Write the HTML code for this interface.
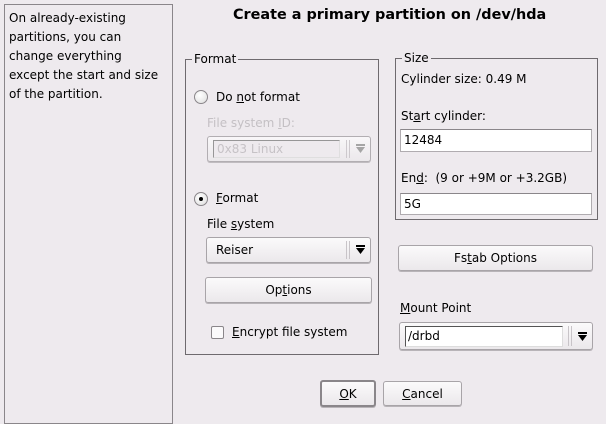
<!DOCTYPE html>
<html><head><meta charset="utf-8"><style>
*{box-sizing:border-box;margin:0;padding:0}
body{width:606px;height:413px;background:#eeeaee;font-family:"DejaVu Sans","Liberation Sans",sans-serif;font-size:12px;color:#000;position:relative;overflow:hidden}
.a{position:absolute;white-space:nowrap}
u{text-decoration:underline}
.panel{position:absolute;left:4px;top:4px;width:169px;height:420px;border:1px solid #8a868a;background:#eeeaee}
.grp{position:absolute;border:1px solid #6e6a6e}
.lg{position:absolute;background:#eeeaee;padding:0 2px;top:-9px;left:6px;line-height:16px}
.btn{position:absolute;border:1px solid #a8a4a8;border-radius:3px;background:linear-gradient(#fbfafb,#ebe8eb);box-shadow:0 1px 0 #b8b4b8;text-align:center;line-height:24px}
.inp{position:absolute;background:#fff;border:1px solid #b0acb0;border-top-color:#8a868a;padding-left:3px;line-height:20px}
.radio{position:absolute;width:14px;height:14px;border-radius:50%;border:1px solid #8a868a;background:radial-gradient(circle at 40% 35%,#fff,#ddd)}
.arrow{position:absolute;right:5px;top:7px;width:9px;height:10px}
.sep{position:absolute;right:20px;top:3px;bottom:3px;width:4px;border-left:1px solid #c8c4c8;border-right:1px solid #c8c4c8}
</style></head><body>
<div class="panel"></div>
<div class="a" style="left:9px;top:9px;line-height:19px;white-space:normal;width:160px">On already-existing<br>partitions, you can<br>change everything<br>except the start and size<br>of the partition.</div>
<div class="a" style="left:233px;top:7px;font-weight:bold;font-size:14.4px">Create a primary partition on /dev/hda</div>

<div class="grp" style="left:185px;top:59px;width:194px;height:296px"><div class="lg">Format</div></div>
<div class="radio" style="left:194px;top:90px"></div>
<div class="a" style="left:216px;top:90px">Do <u>n</u>ot format</div>
<div class="a" style="left:207px;top:116px;color:#c4c0c4">File system <u>I</u>D:</div>
<div class="btn" style="left:207px;top:136px;width:164px;height:26px;opacity:.85">
 <div class="a" style="left:5px;top:3px;width:127px;height:18px;border:1px solid #888;border-right-color:#ddd;border-bottom-color:#ddd;background:#eeeaee;line-height:16px;text-align:left;padding-left:3px;color:#c0bcc0">0x83 Linux</div>
 <div class="sep"></div><svg class="arrow" viewBox="0 0 9 10"><rect x="0" y="0" width="9" height="2" fill="#999"/><path d="M0 3h9L4.5 9z" fill="#999"/></svg></div>
<div class="radio" style="left:194px;top:192px"><div style="position:absolute;left:4px;top:4px;width:4px;height:4px;background:#000;border-radius:50%"></div></div>
<div class="a" style="left:216px;top:191px"><u>F</u>ormat</div>
<div class="a" style="left:207px;top:217px">File <u>s</u>ystem</div>
<div class="btn" style="left:206px;top:237px;width:165px;height:26px;text-align:left;padding-left:9px">Reiser<div class="sep"></div><svg class="arrow" viewBox="0 0 9 10"><rect x="0" y="0" width="9" height="2" fill="#000"/><path d="M0 3h9L4.5 9z" fill="#000"/></svg></div>
<div class="btn" style="left:205px;top:277px;width:167px;height:26px">Op<u>t</u>ions</div>
<div class="a" style="left:211px;top:326px;width:13px;height:13px;border:1px solid #8a868a;border-radius:2px;background:#fbfafb"></div>
<div class="a" style="left:232px;top:325px"><u>E</u>ncrypt file system</div>

<div class="grp" style="left:395px;top:58px;width:203px;height:162px"><div class="lg">Size</div></div>
<div class="a" style="left:401px;top:72px">Cylinder size: 0.49 M</div>
<div class="a" style="left:401px;top:109px">St<u>a</u>rt cylinder:</div>
<div class="inp" style="left:400px;top:129px;width:192px;height:23px">12484</div>
<div class="a" style="left:401px;top:171px">En<u>d</u>:&nbsp; (9 or +9M or +3.2GB)</div>
<div class="inp" style="left:400px;top:193px;width:192px;height:22px">5G</div>

<div class="btn" style="left:398px;top:245px;width:195px;height:26px">Fs<u>t</u>ab Options</div>
<div class="a" style="left:400px;top:301px"><u>M</u>ount Point</div>
<div class="btn" style="left:399px;top:322px;width:194px;height:28px">
 <div class="a" style="left:5px;top:3px;width:158px;height:21px;border:1px solid #555;border-right-color:#ddd;border-bottom-color:#ddd;background:#fff;line-height:19px;text-align:left;padding-left:2px">/drbd</div>
 <div class="sep"></div><svg class="arrow" viewBox="0 0 9 10" style="top:9px"><rect x="0" y="0" width="9" height="2" fill="#000"/><path d="M0 3h9L4.5 9z" fill="#000"/></svg></div>

<div class="btn" style="left:320px;top:380px;width:56px;height:27px;border:2px solid #8a868a;line-height:24px"><u>O</u>K</div>
<div class="btn" style="left:383px;top:381px;width:79px;height:25px;line-height:24px"><u>C</u>ancel</div>
</body></html>
